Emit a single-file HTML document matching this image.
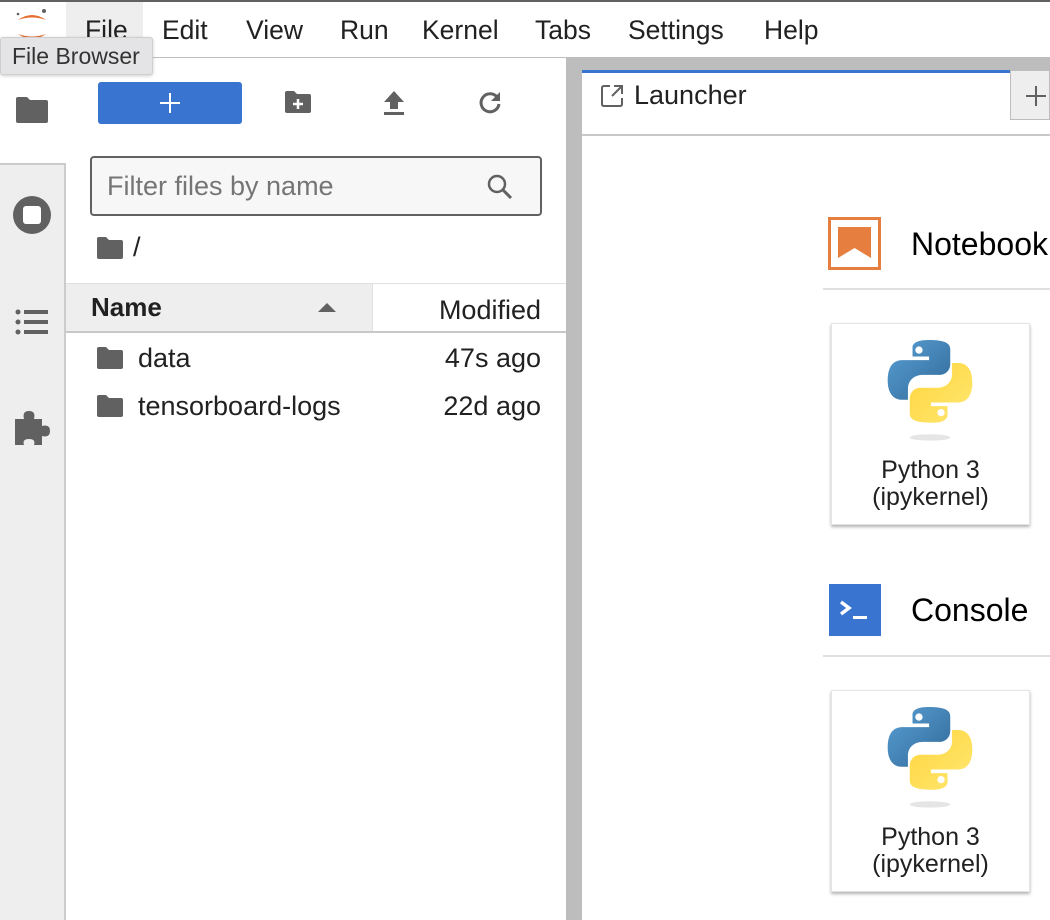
<!DOCTYPE html>
<html><head><meta charset="utf-8"><style>
*{margin:0;padding:0;box-sizing:border-box}
body{width:1050px;height:920px;overflow:hidden;background:#fff;font-family:"Liberation Sans",sans-serif;color:#212121;position:relative}
.a{position:absolute}
.menu span{position:absolute;top:15px;font-size:26.5px;color:#212121}
.t{font-size:27px;position:absolute;white-space:nowrap}
</style></head><body>
<div class="a" style="left:0;top:0;width:1050px;height:2px;background:#616161"></div>
<div class="a" style="left:66px;top:2px;width:77px;height:55px;background:#eee"></div>
<div class="menu">
<span style="left:85px">File</span><span style="left:162px">Edit</span><span style="left:246px">View</span><span style="left:340px">Run</span><span style="left:422px">Kernel</span><span style="left:535px">Tabs</span><span style="left:628px">Settings</span><span style="left:764px">Help</span>
</div>
<svg class="a" style="left:14px;top:6px" width="36" height="36" viewBox="0 0 36 36">
<path d="M4 14 Q18 4 32 14 Q18 9 4 14Z" fill="#e46e2e"/>
<path d="M4 28 Q18 38 32 28 Q18 33 4 28Z" fill="#e46e2e"/>
<circle cx="30" cy="5" r="2" fill="#616161"/><circle cx="4" cy="8" r="1.3" fill="#616161"/>
</svg>
<div class="a" style="left:0;top:57px;width:1050px;height:1px;background:#bdbdbd"></div>
<div class="a" style="left:0;top:163px;width:66px;height:757px;background:#eee;border-top:2px solid #ccc;border-right:2px solid #ccc"></div>
<div class="a" style="left:64px;top:58px;width:2px;height:105px;background:#fff"></div>
<svg class="a" style="left:14px;top:95px" width="36" height="30" viewBox="0 0 36 30"><path d="M2 4 Q2 2 4 2 H13 L16 5 H32 Q34 5 34 7 V26 Q34 28 32 28 H4 Q2 28 2 26Z" fill="#616161"/></svg>
<svg class="a" style="left:12px;top:195px" width="40" height="40" viewBox="0 0 40 40"><circle cx="20" cy="20" r="19" fill="#616161"/><rect x="11" y="11" width="18" height="18" rx="3" fill="#fff"/></svg>
<svg class="a" style="left:14px;top:308px" width="36" height="30" viewBox="0 0 36 30"><g fill="#616161"><circle cx="4" cy="4" r="2.5"/><circle cx="4" cy="14" r="2.5"/><circle cx="4" cy="24" r="2.5"/><rect x="10" y="2" width="24" height="4"/><rect x="10" y="12" width="24" height="4"/><rect x="10" y="22" width="24" height="4"/></g></svg>
<svg class="a" style="left:13px;top:409px" width="38" height="38" viewBox="0 0 38 38"><path d="M2 10 H11 Q9 2 16 2 Q23 2 21 10 H29 V17 Q37 15 37 22 Q37 29 29 27 V36 H21 Q23 30 16 30 Q9 30 11 36 H2Z" fill="#616161"/></svg>
<div class="a" style="left:0;top:37px;width:153px;height:38px;background:#e4e4e6;border:1px solid #cfcfd2;border-radius:3px;box-shadow:0 1px 3px rgba(0,0,0,.2)"><span class="t" style="left:11px;top:5px;font-size:23px;color:#333">File Browser</span></div>
<div class="a" style="left:98px;top:82px;width:144px;height:42px;background:#3874d0;border-radius:3px"></div>
<div class="a" style="left:160px;top:102px;width:20px;height:2px;background:#fff"></div>
<div class="a" style="left:169px;top:93px;width:2px;height:20px;background:#fff"></div>
<svg class="a" style="left:284px;top:90px" width="28" height="24" viewBox="0 0 28 24"><path d="M1 3 Q1 1 3 1 H10 L13 4 H25 Q27 4 27 6 V21 Q27 23 25 23 H3 Q1 23 1 21Z" fill="#616161"/><path d="M14 9V19M9 14H19" stroke="#fff" stroke-width="2.5"/></svg>
<svg class="a" style="left:383px;top:90px" width="22" height="26" viewBox="0 0 22 26"><path d="M11 1 L21 12 H15 V19 H7 V12 H1Z" fill="#616161"/><rect x="1" y="22" width="20" height="3" fill="#616161"/></svg>
<svg class="a" style="left:478px;top:90px" width="24" height="24" viewBox="0 0 24 24"><path d="M19 7 A9 9 0 1 0 21 14" fill="none" stroke="#616161" stroke-width="3"/><path d="M22 2 V11 H13Z" fill="#616161"/></svg>
<div class="a" style="left:90px;top:156px;width:452px;height:60px;border:2px solid #616161;border-radius:4px;background:#f7f7f7"></div>
<span class="t" style="left:107px;top:171px;color:#757575">Filter files by name</span>
<svg class="a" style="left:486px;top:173px" width="28" height="28" viewBox="0 0 28 28"><circle cx="11" cy="11" r="8" fill="none" stroke="#616161" stroke-width="2.5"/><path d="M17 17 L25 25" stroke="#616161" stroke-width="3"/></svg>
<svg class="a" style="left:96px;top:236px" width="28" height="24" viewBox="0 0 28 24"><path d="M1 3 Q1 1 3 1 H10 L13 4 H25 Q27 4 27 6 V21 Q27 23 25 23 H3 Q1 23 1 21Z" fill="#616161"/></svg>
<span class="t" style="left:133px;top:232px">/</span>
<div class="a" style="left:66px;top:283px;width:500px;height:1px;background:#e0e0e0"></div>
<div class="a" style="left:66px;top:284px;width:306px;height:48px;background:#eee"></div>
<div class="a" style="left:372px;top:284px;width:1px;height:48px;background:#e0e0e0"></div>
<div class="a" style="left:66px;top:331px;width:500px;height:2px;background:#c8c8c8"></div>
<span class="t" style="left:91px;top:292px;font-weight:bold;font-size:26px">Name</span>
<div class="a" style="left:318px;top:303px;width:0;height:0;border-left:9px solid transparent;border-right:9px solid transparent;border-bottom:9px solid #616161"></div>
<span class="t" style="right:509px;top:295px">Modified</span>
<svg class="a" style="left:96px;top:346px" width="28" height="24" viewBox="0 0 28 24"><path d="M1 3 Q1 1 3 1 H10 L13 4 H25 Q27 4 27 6 V21 Q27 23 25 23 H3 Q1 23 1 21Z" fill="#616161"/></svg>
<span class="t" style="left:138px;top:343px">data</span><span class="t" style="right:509px;top:343px">47s ago</span>
<svg class="a" style="left:96px;top:394px" width="28" height="24" viewBox="0 0 28 24"><path d="M1 3 Q1 1 3 1 H10 L13 4 H25 Q27 4 27 6 V21 Q27 23 25 23 H3 Q1 23 1 21Z" fill="#616161"/></svg>
<span class="t" style="left:138px;top:391px">tensorboard-logs</span><span class="t" style="right:509px;top:391px">22d ago</span>
<div class="a" style="left:566px;top:58px;width:16px;height:862px;background:#bdbdbd"></div>
<div class="a" style="left:582px;top:58px;width:468px;height:12px;background:#bdbdbd"></div>
<div class="a" style="left:582px;top:70px;width:428px;height:64px;background:#fff;border-top:3px solid #3874d0"></div>
<div class="a" style="left:1010px;top:70px;width:40px;height:50px;background:#eee;border:1px solid #bdbdbd"></div>
<div class="a" style="left:1026px;top:95px;width:20px;height:2px;background:#616161"></div>
<div class="a" style="left:1035px;top:86px;width:2px;height:20px;background:#616161"></div>
<div class="a" style="left:582px;top:134px;width:468px;height:2px;background:#c8c8c8"></div>
<svg class="a" style="left:600px;top:84px" width="24" height="24" viewBox="0 0 24 24"><path d="M10 2 H4 Q2 2 2 4 V20 Q2 22 4 22 H20 Q22 22 22 20 V14" fill="none" stroke="#616161" stroke-width="2"/><path d="M12 12 L21 3 M14 2 H22 V10" fill="none" stroke="#616161" stroke-width="2"/></svg>
<span class="t" style="left:634px;top:80px;color:#212121">Launcher</span>
<div class="a" style="left:828px;top:217px;width:53px;height:53px;border:3px solid #e57e3e;background:#fff"></div>
<svg class="a" style="left:838px;top:227px" width="33" height="33" viewBox="0 0 33 33"><path d="M0 0 H33 V31 L16.5 21 L0 31Z" fill="#e57e3e"/></svg>
<span class="t" style="left:911px;top:226px;font-size:32px;color:#000">Notebook</span>
<div class="a" style="left:823px;top:288px;width:227px;height:2px;background:#e0e0e0"></div>
<div class="a" style="left:829px;top:584px;width:52px;height:52px;background:#3874d0"></div>
<svg class="a" style="left:829px;top:584px" width="52" height="52" viewBox="0 0 52 52"><path d="M12 18 L20 24 L12 30" fill="none" stroke="#fff" stroke-width="3.5"/><rect x="24" y="32" width="14" height="3" fill="#fff"/></svg>
<span class="t" style="left:911px;top:592px;font-size:32px;color:#000">Console</span>
<div class="a" style="left:823px;top:655px;width:227px;height:2px;background:#e0e0e0"></div>
<div class="a" style="left:831px;top:323px;width:199px;height:202px;background:#fff;box-shadow:0 2px 3px rgba(0,0,0,.3);border:1px solid #e4e4e4"></div>
<div class="a" style="left:831px;top:690px;width:199px;height:202px;background:#fff;box-shadow:0 2px 3px rgba(0,0,0,.3);border:1px solid #e4e4e4"></div>
<svg class="a" style="left:884px;top:338px" width="92" height="106" viewBox="0 0 100 115">
<defs><linearGradient id="b" x1="0" y1="0" x2="1" y2="1"><stop offset="0" stop-color="#5a9fd4"/><stop offset="1" stop-color="#306998"/></linearGradient>
<linearGradient id="y" x1="0" y1="0" x2="1" y2="1"><stop offset="0" stop-color="#ffe873"/><stop offset="1" stop-color="#ffd43b"/></linearGradient></defs>
<path d="M48 2 C30 2 31 10 31 10 V20 H49 V24 H20 C10 24 4 31 4 46 C4 61 11 67 19 67 H26 V55 C26 46 33 40 42 40 H60 C67 40 72 35 72 28 V12 C72 5 65 2 48 2Z M38 9 A4 4 0 1 1 38 17 A4 4 0 1 1 38 9Z" fill="url(#b)" fill-rule="evenodd"/>
<path d="M48 2 C30 2 31 10 31 10 V20 H49 V24 H20 C10 24 4 31 4 46 C4 61 11 67 19 67 H26 V55 C26 46 33 40 42 40 H60 C67 40 72 35 72 28 V12 C72 5 65 2 48 2Z M38 9 A4 4 0 1 1 38 17 A4 4 0 1 1 38 9Z" fill="url(#y)" fill-rule="evenodd" transform="rotate(180 50 47)"/>
<ellipse cx="50" cy="108" rx="22" ry="3.5" fill="#000" opacity=".1"/>
</svg>
<svg class="a" style="left:884px;top:705px" width="92" height="106" viewBox="0 0 100 115">
<path d="M48 2 C30 2 31 10 31 10 V20 H49 V24 H20 C10 24 4 31 4 46 C4 61 11 67 19 67 H26 V55 C26 46 33 40 42 40 H60 C67 40 72 35 72 28 V12 C72 5 65 2 48 2Z M38 9 A4 4 0 1 1 38 17 A4 4 0 1 1 38 9Z" fill="url(#b)" fill-rule="evenodd"/>
<path d="M48 2 C30 2 31 10 31 10 V20 H49 V24 H20 C10 24 4 31 4 46 C4 61 11 67 19 67 H26 V55 C26 46 33 40 42 40 H60 C67 40 72 35 72 28 V12 C72 5 65 2 48 2Z M38 9 A4 4 0 1 1 38 17 A4 4 0 1 1 38 9Z" fill="url(#y)" fill-rule="evenodd" transform="rotate(180 50 47)"/>
<ellipse cx="50" cy="108" rx="22" ry="3.5" fill="#000" opacity=".1"/>
</svg>
<div class="a" style="left:831px;top:457px;width:199px;text-align:center;font-size:25px;line-height:27px;color:#212121">Python 3<br>(ipykernel)</div>
<div class="a" style="left:831px;top:824px;width:199px;text-align:center;font-size:25px;line-height:27px;color:#212121">Python 3<br>(ipykernel)</div>
</body></html>
